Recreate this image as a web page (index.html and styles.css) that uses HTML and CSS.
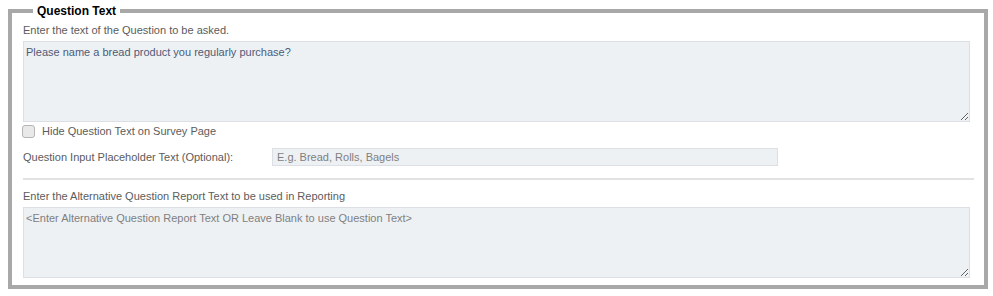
FILE: index.html
```html
<!DOCTYPE html>
<html lang="en">

<head>
    <meta charset="UTF-8">
    <meta name="viewport" content="width=device-width, initial-scale=1.0">
    <title>Question Text</title>
    <link rel="stylesheet" href="styles.css">
</head>

<body>

    <div class="page">
        <fieldset class="question-box">
            <legend>Question Text</legend>

            <!-- Question text -->
            <label class="field-label" for="questionText">Enter the text of the Question to be asked.</label>
            <textarea id="questionText" class="text-area main-text">Please name a bread product you regularly purchase?</textarea>

            <div class="check-row">
                <input type="checkbox" id="hideText" class="check">
                <label for="hideText">Hide Question Text on Survey Page</label>
            </div>

            <div class="input-row">
                <label class="row-label" for="placeholderText">Question Input Placeholder Text (Optional):</label>
                <input type="text" id="placeholderText" class="text-input" placeholder="E.g. Bread, Rolls, Bagels">
            </div>

            <hr class="divider">

            <!-- Report text -->
            <label class="field-label second" for="reportText">Enter the Alternative Question Report Text to be used in Reporting</label>
            <textarea id="reportText" class="text-area report-text" placeholder="<Enter Alternative Question Report Text OR Leave Blank to use Question Text>"></textarea>
        </fieldset>
    </div>

</body>

</html>
```

FILE: styles.css
```css
body {
    margin: 0;
    font-family: "Liberation Sans", Arial, sans-serif;
    font-size: 11px;
    color: #5c5c5c;
    background: #fff;
}

.page {
    padding: 4px 0 0 8px;
}

.question-box {
    box-sizing: border-box;
    width: 980px;
    height: 285px;
    margin: 0;
    padding: 4px 10px 0 11px;
    border: 4px solid #a8a8a8;
    display: flex;
    flex-direction: column;
}

.question-box legend {
    margin-left: 10px;
    padding: 0 4px;
    font-weight: bold;
    font-size: 12px;
    line-height: 14px;
    color: #000;
}

.field-label {
    display: block;
    line-height: 15px;
    margin-top: 1px;
}

.field-label.second {
    margin-top: 9px;
}

.text-area {
    box-sizing: border-box;
    width: 947px;
    margin: 3px 0 0 0;
    padding: 3px 2px;
    border: 1px solid #dcdfe3;
    border-radius: 0;
    background: #eef1f4;
    font-family: "Liberation Sans", Arial, sans-serif;
    font-size: 11px;
    line-height: 15px;
    color: #4d5b78;
    outline: none;
}

.main-text {
    height: 81px;
}

.report-text {
    height: 71px;
    margin-top: 3px;
}

.text-area::placeholder,
.text-input::placeholder {
    color: #7f7f7f;
    opacity: 1;
}

.check-row {
    display: flex;
    align-items: center;
    height: 15px;
    margin-top: 2px;
    line-height: 15px;
}

.check {
    appearance: none;
    width: 13px;
    height: 13px;
    margin: 0 7px 0 -1px;
    border: 1px solid #b5b5b5;
    border-radius: 3px;
    background: #e9e9e9;
}

.input-row {
    display: flex;
    align-items: center;
    margin-top: 9px;
    line-height: 15px;
}

.row-label {
    width: 249px;
}

.text-input {
    box-sizing: border-box;
    width: 506px;
    height: 18px;
    margin: 0;
    padding: 0 4px;
    border: 1px solid #dcdfe3;
    background: #eef1f4;
    font-family: "Liberation Sans", Arial, sans-serif;
    font-size: 11px;
    color: #5c5c5c;
    outline: none;
}

.divider {
    width: 951px;
    margin: 12px 0 0 0;
    border: 0;
    border-top: 2px solid #e2e2e2;
}
```
